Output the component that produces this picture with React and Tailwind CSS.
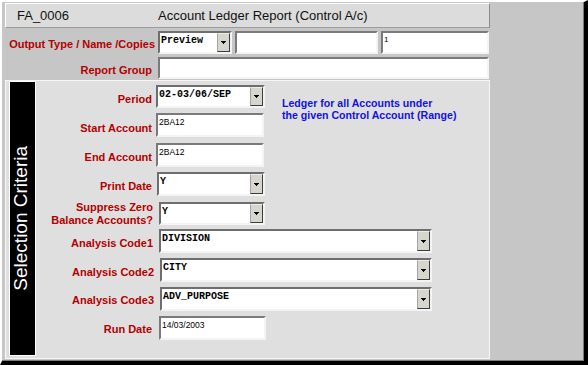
import React from "react";

function Arrow() {
  return (
    <svg width="5" height="3" viewBox="0 0 5 3" shapeRendering="crispEdges">
      <rect x="0" y="0" width="5" height="1" fill="#000" />
      <rect x="1" y="1" width="3" height="1" fill="#000" />
      <rect x="2" y="2" width="1" height="1" fill="#000" />
    </svg>
  );
}

function Select({ value, className }) {
  return (
    <div
      className={`flex shrink-0 border-2 border-t-[#6e6e6e] border-l-[#6e6e6e] border-b-[#f4f4f4] border-r-[#f4f4f4] bg-white ${className}`}
    >
      <div className="flex-1 pl-[1px] pt-[2px] font-['Liberation_Mono',monospace] font-bold text-[10px] leading-[11px] text-black whitespace-nowrap">
        {value}
      </div>
      <div className="w-[13px] flex items-center justify-center bg-[#d6d6ce] border border-t-[#ececec] border-l-[#a4a4a4] border-r-[#3c3c3c] border-b-[#3c3c3c]">
        <Arrow />
      </div>
    </div>
  );
}

function Input({ value, className }) {
  return (
    <div
      className={`shrink-0 border-2 border-t-[#7a7a7a] border-l-[#7a7a7a] border-b-[#f4f4f4] border-r-[#f4f4f4] bg-white pl-[1px] pt-[2px] font-['Liberation_Sans',sans-serif] text-[8.5px] leading-[10px] text-black whitespace-nowrap ${className}`}
    >
      {value}
    </div>
  );
}

function Label({ children, className }) {
  return (
    <div
      className={`shrink-0 text-right font-bold text-[11px] leading-[13px] text-[#b40000] whitespace-nowrap ${className}`}
    >
      {children}
    </div>
  );
}

export default function App() {
  return (
    <div className="w-[588px] h-[365px] bg-[#c6c6c6] border-t-2 border-l-2 border-t-white border-l-white border-r-4 border-b-4 border-r-black border-b-black overflow-hidden font-['Liberation_Sans',Arial,sans-serif]">
      <div className="w-full h-full border-r border-b border-[#7a7a7a] flex flex-col">
        {/* Title bar */}
        <div className="ml-[3px] mt-[1px] w-[485px] h-[25px] flex items-center bg-[#dcdcdc] border border-t-white border-l-white border-r-[#8c8c8c] border-b-[#9c9c9c] text-[13px] text-[#111] shrink-0">
          <div className="w-[152px] pl-[11px]">FA_0006</div>
          <div>Account Ledger Report (Control A/c)</div>
        </div>

        {/* Output Type row */}
        <div className="mt-[3px] h-[23px] flex shrink-0">
          <Label className="w-[153px] pt-[7px]">Output Type / Name /Copies</Label>
          <Select value="Preview" className="ml-[3px] w-[74px] h-[23px]" />
          <Input value="" className="ml-[3px] w-[143px] h-[23px]" />
          <Input value="1" className="ml-[3px] w-[108px] h-[23px] text-[8px]" />
        </div>

        {/* Report Group row */}
        <div className="mt-[3px] h-[22px] flex shrink-0">
          <Label className="w-[150px] pt-[7px]">Report Group</Label>
          <Input value="" className="ml-[6px] w-[331px] h-[22px]" />
        </div>

        {/* Selection panel */}
        <div className="mt-[1px] ml-[3px] w-[485px] h-[279px] bg-[#dfdfdf] border border-[#f6f6f6] flex shrink-0">
          <div className="ml-[3px] w-[27px] h-[275px] bg-black border border-white flex items-center justify-center shrink-0">
            <span className="[writing-mode:vertical-rl] rotate-180 text-white text-[19px] leading-[19px] whitespace-nowrap mr-[4px]">
              Selection Criteria
            </span>
          </div>

          <div className="flex flex-col">
            <div className="mt-[4px] flex">
              <div className="flex flex-col">
                {/* Period */}
                <div className="h-[23px] flex">
                  <Label className="w-[116px] pt-[8px]">Period</Label>
                  <Select value="02-03/06/SEP" className="ml-[4px] w-[109px] h-[23px]" />
                </div>
                {/* Start Account */}
                <div className="mt-[5px] h-[24px] flex">
                  <Label className="w-[116px] pt-[9px]">Start Account</Label>
                  <Input value="2BA12" className="ml-[4px] w-[108px] h-[24px]" />
                </div>
                {/* End Account */}
                <div className="mt-[6px] h-[24px] flex">
                  <Label className="w-[116px] pt-[8px]">End Account</Label>
                  <Input value="2BA12" className="ml-[4px] w-[108px] h-[24px]" />
                </div>
                {/* Print Date */}
                <div className="mt-[5px] h-[24px] flex">
                  <Label className="w-[116px] pt-[8px]">Print Date</Label>
                  <Select value="Y" className="ml-[5px] w-[108px] h-[24px]" />
                </div>
                {/* Suppress Zero */}
                <div className="mt-[6px] h-[23px] flex">
                  <Label className="w-[117px] -mt-[1px] leading-[12px]">
                    Suppress Zero
                    <br />
                    Balance Accounts?
                  </Label>
                  <Select value="Y" className="ml-[6px] w-[106px] h-[23px]" />
                </div>
              </div>
              <div className="ml-[17px] mt-[12px] font-bold text-[10.6px] leading-[12px] text-[#1212e2] whitespace-nowrap">
                Ledger for all Accounts under
                <br />
                the given Control Account (Range)
              </div>
            </div>

            {/* Analysis Code1 */}
            <div className="mt-[4px] h-[24px] flex">
              <Label className="w-[117px] pt-[8px]">Analysis Code1</Label>
              <Select value="DIVISION" className="ml-[6px] w-[273px] h-[24px]" />
            </div>
            {/* Analysis Code2 */}
            <div className="mt-[5px] h-[24px] flex">
              <Label className="w-[118px] pt-[8px]">Analysis Code2</Label>
              <Select value="CITY" className="ml-[6px] w-[272px] h-[24px]" />
            </div>
            {/* Analysis Code3 */}
            <div className="mt-[5px] h-[24px] flex">
              <Label className="w-[118px] pt-[7px]">Analysis Code3</Label>
              <Select value="ADV_PURPOSE" className="ml-[6px] w-[272px] h-[24px]" />
            </div>
            {/* Run Date */}
            <div className="mt-[5px] h-[24px] flex">
              <Label className="w-[116px] pt-[7px]">Run Date</Label>
              <Input value="14/03/2003" className="ml-[7px] w-[107px] h-[24px]" />
            </div>
          </div>
        </div>
      </div>
    </div>
  );
}
